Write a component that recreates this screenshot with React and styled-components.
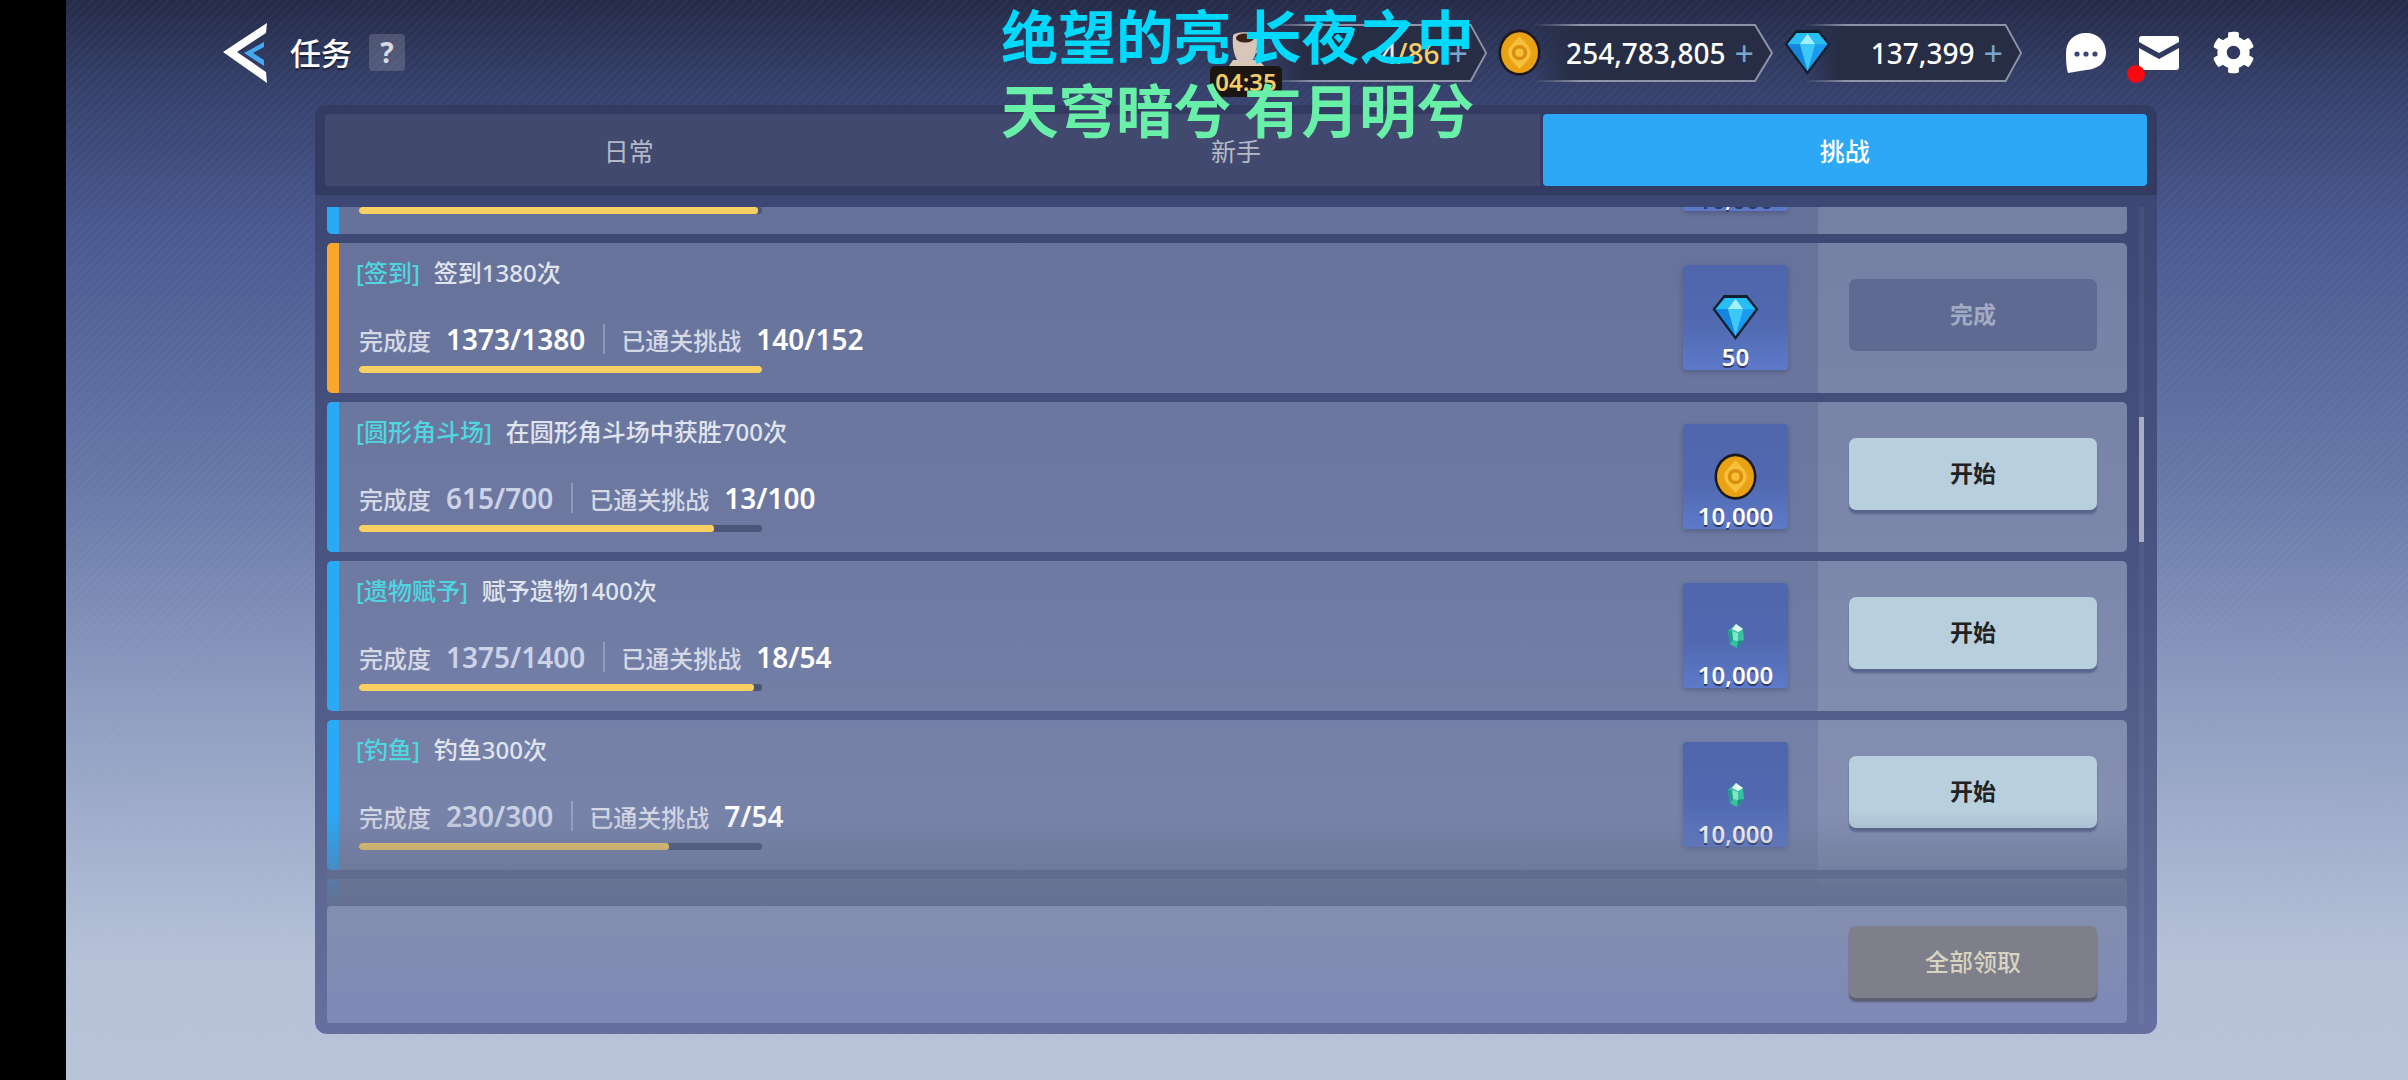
import React from "react";
import styled, { createGlobalStyle } from "styled-components";
import { FaCog } from "react-icons/fa";

const GlobalStyle = createGlobalStyle`
  html, body {
    margin: 0;
    padding: 0;
    background: #000;
  }
  * {
    box-sizing: border-box;
  }
`;

const FONT = `"Noto Sans", "Noto Sans CJK SC", sans-serif`;

const tasks = [
  { id: 0, accent: "#2aa9f7", reward: "gem", amount: "10,000", pct: 99, track: true },
  {
    id: 1,
    accent: "#f9a62b",
    tag: "[签到]",
    title: "签到1380次",
    done: "1373/1380",
    doneBright: true,
    stage: "140/152",
    pct: 100,
    reward: "diamond",
    amount: "50",
    finished: true,
  },
  {
    id: 2,
    accent: "#2aa9f7",
    tag: "[圆形角斗场]",
    title: "在圆形角斗场中获胜700次",
    done: "615/700",
    stage: "13/100",
    pct: 88,
    reward: "coin",
    amount: "10,000",
  },
  {
    id: 3,
    accent: "#2aa9f7",
    tag: "[遗物赋予]",
    title: "赋予遗物1400次",
    done: "1375/1400",
    stage: "18/54",
    pct: 98,
    reward: "gem",
    amount: "10,000",
  },
  {
    id: 4,
    accent: "#2aa9f7",
    tag: "[钓鱼]",
    title: "钓鱼300次",
    done: "230/300",
    stage: "7/54",
    pct: 77,
    reward: "gem",
    amount: "10,000",
  },
  { id: 5, accent: "#2aa9f7", reward: "gem", amount: "", pct: 0 },
];

function CoinIcon({ size = 42 }) {
  return (
    <svg width={size} height={size * 1.1} viewBox="0 0 42 46">
      <ellipse cx="21" cy="23" rx="20.5" ry="22.5" fill="#1d1a1f" />
      <ellipse cx="21" cy="23" rx="18" ry="20" fill="#e9a214" />
      <path d="M21 7 C25 12 32 17 32 23 C32 29 25 34 21 39 C17 34 10 29 10 23 C10 17 17 12 21 7 Z" fill="#f8bf3a" />
      <circle cx="21" cy="23" r="7.5" fill="#d98f10" />
      <circle cx="21" cy="23" r="4" fill="#f8bf3a" />
    </svg>
  );
}

function DiamondIcon({ width = 49, height = 47 }) {
  return (
    <svg width={width} height={height} viewBox="0 0 47 46">
      <path d="M12 1 H35 L46 15 L23.5 45 L1 15 Z" fill="#11202e" />
      <path d="M13 4 H34 L43 15 L23.5 41 L4 15 Z" fill="#1a9bf0" />
      <path d="M13 4 H34 L43 15 H4 Z" fill="#29bdf6" />
      <path d="M23.5 5 L31 15 H16 Z" fill="#a3effa" />
      <path d="M16 15 H31 L23.5 41 Z" fill="#3dc9f7" />
      <path d="M4 15 H16 L23.5 41 Z" fill="#1285e0" />
    </svg>
  );
}

function GemIcon() {
  return (
    <svg width="18" height="26" viewBox="0 0 18 26">
      <path d="M9 1 L16 6 L17 17 L10 25 L3 21 L1 8 Z" fill="#38c0a0" />
      <path d="M9 1 L16 6 L11 9 L5 6 Z" fill="#e6fbf2" />
      <path d="M5 8 L11 10 L11 18 L6 17 Z" fill="#7fe6c6" />
      <path d="M11 18 L17 17 L10 25 Z" fill="#1e8f7c" />
      <path d="M1 8 L5 8 L6 17 L3 21 Z" fill="#1f9c8a" />
    </svg>
  );
}

function BackIcon() {
  return (
    <svg width="46" height="62" viewBox="0 0 46 62">
      <path d="M45 1 L1 30 L45 61 L44 50 L15 30 L44 11 Z" fill="#fff" />
      <path d="M42 20 L22 31 L42 44 L42 38 L31 31 L42 25 Z" fill="#46a9ef" />
    </svg>
  );
}

function CupIcon() {
  return (
    <svg width="40" height="38" viewBox="0 0 40 38">
      <path d="M3 36 L7 30 H33 L38 36 Z" fill="#dcc8b6" />
      <path d="M7 6 C7 1 31 1 31 6 C32 16 30 26 26 31 H12 C8 26 6 16 7 6 Z" fill="#d8c6bb" />
      <ellipse cx="19" cy="8" rx="9" ry="4.5" fill="#3a2318" />
      <path d="M31 10 C37 10 37 20 29 22" fill="none" stroke="#c8b3a5" strokeWidth="3" />
    </svg>
  );
}

function ChatIcon() {
  return (
    <svg width="40" height="40" viewBox="0 0 40 40">
      <path d="M20 0 C32 0 40 8 40 20 C40 30 32 36 20 37 C14 38 8 39 2 40 C0 34 0 26 0 20 C0 8 8 0 20 0 Z" fill="#fff" />
      <circle cx="11" cy="21" r="2.6" fill="#3b4672" />
      <circle cx="20" cy="21" r="2.6" fill="#3b4672" />
      <circle cx="29" cy="21" r="2.6" fill="#3b4672" />
    </svg>
  );
}

function MailIcon() {
  return (
    <svg width="40" height="34" viewBox="0 0 40 34">
      <path d="M3 0 H37 C39 0 40 1 40 3 V6 L20 17 L0 6 V3 C0 1 1 0 3 0 Z" fill="#fff" />
      <path d="M0 12 L20 23 L40 12 V31 C40 33 39 34 37 34 H3 C1 34 0 33 0 31 Z" fill="#fff" />
    </svg>
  );
}

function PillFrame() {
  return (
    <FrameSvg preserveAspectRatio="none" viewBox="0 0 240 58">
      <defs>
        <linearGradient id="pillFill" x1="0" x2="1" y1="0" y2="0">
          <stop offset="0" stopColor="#262d45" stopOpacity="0" />
          <stop offset="0.16" stopColor="#262d45" />
          <stop offset="1" stopColor="#262d45" />
        </linearGradient>
        <linearGradient id="pillLine" x1="0" x2="1" y1="0" y2="0">
          <stop offset="0" stopColor="#8f94a8" stopOpacity="0" />
          <stop offset="0.2" stopColor="#8f94a8" />
          <stop offset="1" stopColor="#8f94a8" />
        </linearGradient>
      </defs>
      <path d="M0 1 H222 L239 29 L222 57 H0 Z" fill="url(#pillFill)" />
      <path d="M0 1 H222 L239 29 L222 57 H0" fill="none" stroke="url(#pillLine)" strokeWidth="2" />
    </FrameSvg>
  );
}

function Reward({ type, amount }) {
  return (
    <RewardBox>
      <RewardIcon>
        {type === "coin" && <CoinIcon size={43} />}
        {type === "diamond" && <DiamondIcon />}
        {type === "gem" && <GemIcon />}
      </RewardIcon>
      <RewardAmount>{amount}</RewardAmount>
    </RewardBox>
  );
}

function TaskCard({ task }) {
  return (
    <Card>
      <Accent $color={task.accent} />
      <CardMain>
        <CardInfo>
          <TitleRow>
            {task.tag && <Tag>{task.tag}</Tag>}
            {task.title && <Title>{task.title}</Title>}
          </TitleRow>
          <ProgressRow>
            {task.done && (
              <>
                <Label>完成度</Label>
                <Count $bright={task.doneBright}>{task.done}</Count>
                <Divider />
                <Label>已通关挑战</Label>
                <Count $bright>{task.stage}</Count>
              </>
            )}
          </ProgressRow>
          <BarTrack>
            <BarFill style={{ width: `${task.pct}%` }} />
          </BarTrack>
        </CardInfo>
        <Reward type={task.reward} amount={task.amount} />
      </CardMain>
      <CardAction>
        {task.finished && <DoneButton>完成</DoneButton>}
        {!task.finished && task.title && <StartButton>开始</StartButton>}
      </CardAction>
    </Card>
  );
}

export default function App() {
  return (
    <Page>
      <GlobalStyle />
      <SideBar />
      <Stage>
        <Header>
          <HeaderLeft>
            <BackIcon />
            <PageTitle>任务</PageTitle>
            <HelpBadge>?</HelpBadge>
          </HeaderLeft>
          <HeaderRight>
            <Pill $width={218}>
              <PillFrame />
              <EnergyText>
                <b>4</b>/86
              </EnergyText>
              <Plus>+</Plus>
            </Pill>
            <Currency $gap={11}>
              <CurrencyIcon $overlap={8}>
                <CoinIcon size={43} />
              </CurrencyIcon>
              <Pill $width={240}>
                <PillFrame />
                <Amount>254,783,805</Amount>
                <Plus>+</Plus>
              </Pill>
            </Currency>
            <Currency $gap={10}>
              <CurrencyIcon $overlap={28}>
                <DiamondIcon />
              </CurrencyIcon>
              <Pill $width={218}>
                <PillFrame />
                <Amount>137,399</Amount>
                <Plus>+</Plus>
              </Pill>
            </Currency>
            <IconGroup>
              <ChatIcon />
              <MailButton>
                <MailIcon />
                <RedDot />
              </MailButton>
              <FaCog size={43} color="#fff" />
            </IconGroup>
          </HeaderRight>
        </Header>
        <Panel>
          <Tabs>
            <Tab>日常</Tab>
            <Tab>新手</Tab>
            <Tab $active>挑战</Tab>
          </Tabs>
          <PanelBody>
            <BodyColumn>
              <ListClip>
                <CardList>
                  {tasks.map((t) => (
                    <TaskCard key={t.id} task={t} />
                  ))}
                </CardList>
                <ListFade />
              </ListClip>
              <Footer>
                <ClaimButton>全部领取</ClaimButton>
              </Footer>
            </BodyColumn>
            <ScrollTrack>
              <ScrollThumb />
            </ScrollTrack>
          </PanelBody>
        </Panel>
      </Stage>
      <FloatingTimer>
        <CupIcon />
        <TimerText>04:35</TimerText>
      </FloatingTimer>
      <Lyrics>
        <LyricLine $color="#00d9fb">绝望的亮 长夜之中</LyricLine>
        <LyricLine $color="#68efa8">天穹暗兮 有月明兮</LyricLine>
      </Lyrics>
    </Page>
  );
}

const Page = styled.div`
  position: relative;
  display: flex;
  width: 2408px;
  height: 1080px;
  overflow: hidden;
  font-family: ${FONT};
  background: #000;
`;

const SideBar = styled.div`
  flex: 0 0 66px;
  background: #000;
`;

const Stage = styled.div`
  flex: 1;
  display: flex;
  flex-direction: column;
  background:
    repeating-linear-gradient(135deg, rgba(255, 255, 255, 0.025) 0 2px, transparent 2px 6px),
    linear-gradient(180deg, #252b48 0, #36416c 90px, #4a5990 230px, #6778a8 480px, #8d9cc0 700px, #b6c1d8 960px, #b8c3d9 100%);
`;

const Header = styled.div`
  flex: 0 0 105px;
  display: flex;
  align-items: center;
  justify-content: space-between;
  padding: 0 153px 0 156px;
`;

const HeaderLeft = styled.div`
  display: flex;
  align-items: center;
`;

const PageTitle = styled.div`
  margin-left: 22px;
  font-size: 31px;
  font-weight: 500;
  line-height: 40px;
  color: #fff;
  text-shadow: 0 2px 1px #1c2138;
`;

const HelpBadge = styled.div`
  width: 36px;
  height: 37px;
  margin-left: 17px;
  border-radius: 4px;
  background: rgba(255, 255, 255, 0.16);
  color: #d8dbe4;
  font-size: 28px;
  font-weight: 700;
  line-height: 37px;
  text-align: center;
`;

const HeaderRight = styled.div`
  display: flex;
  align-items: center;
`;

const Currency = styled.div`
  display: flex;
  align-items: center;
  margin-left: ${(p) => p.$gap}px;
`;

const CurrencyIcon = styled.div`
  position: relative;
  z-index: 1;
  display: flex;
  margin-right: -${(p) => p.$overlap}px;
`;

const Pill = styled.div`
  position: relative;
  display: flex;
  align-items: center;
  justify-content: flex-end;
  width: ${(p) => p.$width}px;
  height: 58px;
  padding-right: 19px;
`;

const FrameSvg = styled.svg`
  position: absolute;
  inset: 0;
  width: 100%;
  height: 100%;
`;

const Amount = styled.span`
  position: relative;
  color: #fff;
  font-size: 28px;
  font-weight: 500;
`;

const EnergyText = styled.span`
  position: relative;
  color: #f4cf6a;
  font-size: 28px;
  font-weight: 500;
  b {
    color: #e8e8e8;
    font-weight: 500;
  }
`;

const Plus = styled.span`
  position: relative;
  margin-left: 9px;
  color: #7ba6cc;
  font-size: 34px;
  line-height: 34px;
`;

const IconGroup = styled.div`
  display: flex;
  align-items: center;
  gap: 33px;
  margin-left: 44px;
`;

const MailButton = styled.div`
  position: relative;
  display: flex;
`;

const RedDot = styled.span`
  position: absolute;
  left: -12px;
  bottom: -13px;
  width: 18px;
  height: 18px;
  border-radius: 50%;
  background: #f60a0f;
`;

const Panel = styled.div`
  width: 1842px;
  height: 929px;
  margin-left: 249px;
  border-radius: 12px;
  background: linear-gradient(180deg, #333b63 0, #333b63 90px, #3c4774 90px, #4a5582 480px, #5c6690 760px, #666f9f 100%);
`;

const Tabs = styled.div`
  display: grid;
  grid-template-columns: 1fr 1fr 1fr;
  height: 90px;
  padding: 9px 10px;
  border-radius: 4px;
`;

const Tab = styled.div`
  display: flex;
  align-items: center;
  justify-content: center;
  background: #414a6e;
  color: #b4b9c8;
  font-size: 25px;
  &:first-child {
    border-radius: 4px 0 0 4px;
  }
  ${(p) =>
    p.$active &&
    `
    margin-left: 3px;
    border-radius: 4px;
    background: #2ca8f6;
    color: #fff;
    font-weight: 500;
  `}
`;

const PanelBody = styled.div`
  display: flex;
  gap: 12px;
  height: 816px;
  margin-top: 12px;
  padding-left: 12px;
`;

const BodyColumn = styled.div`
  display: flex;
  flex-direction: column;
  width: 1800px;
`;

const ListClip = styled.div`
  position: relative;
  height: 699px;
  overflow: hidden;
`;

const CardList = styled.div`
  display: flex;
  flex-direction: column;
  gap: 9px;
  margin-top: -123px;
`;

const ListFade = styled.div`
  position: absolute;
  left: 0;
  right: 0;
  bottom: 0;
  height: 95px;
  background: linear-gradient(180deg, rgba(100, 110, 142, 0) 0, rgba(100, 110, 142, 0.5) 62%, rgba(100, 110, 142, 0.82) 75%, rgba(101, 112, 147, 1) 100%);
`;

const Card = styled.div`
  display: flex;
  flex: 0 0 150px;
  height: 150px;
  border-radius: 5px;
  overflow: hidden;
  background: rgba(170, 185, 215, 0.38);
`;

const Accent = styled.div`
  flex: 0 0 12px;
  background: ${(p) => p.$color};
`;

const CardMain = styled.div`
  flex: 1;
  display: flex;
  align-items: center;
  justify-content: space-between;
  padding: 0 30px 0 20px;
`;

const CardInfo = styled.div`
  align-self: flex-start;
  display: flex;
  flex-direction: column;
  width: 403px;
  padding-top: 14px;
`;

const TitleRow = styled.div`
  display: flex;
  height: 32px;
  margin-left: -3px;
  white-space: nowrap;
  font-size: 24px;
  font-weight: 500;
  line-height: 32px;
`;

const Tag = styled.span`
  margin-right: 14px;
  color: #4fd6e0;
`;

const Title = styled.span`
  color: #e0e4ee;
`;

const ProgressRow = styled.div`
  display: flex;
  align-items: center;
  height: 36px;
  margin-top: 32px;
  white-space: nowrap;
`;

const Label = styled.span`
  flex: none;
  color: #d5d9e6;
  font-size: 24px;
  font-weight: 500;
`;

const Count = styled.span`
  flex: none;
  margin-left: 15px;
  color: ${(p) => (p.$bright ? "#fff" : "#ccd3e6")};
  font-size: 28px;
  font-weight: 600;
`;

const Divider = styled.span`
  flex: none;
  width: 2px;
  height: 30px;
  margin: 0 16px 0 18px;
  background: rgba(255, 255, 255, 0.25);
`;

const BarTrack = styled.div`
  height: 7px;
  margin-top: 9px;
  border-radius: 3px;
  overflow: hidden;
  background: #4b5679;
`;

const BarFill = styled.div`
  height: 100%;
  border-radius: 3px;
  background: #f7cf62;
`;

const RewardBox = styled.div`
  display: grid;
  place-items: center;
  width: 105px;
  height: 105px;
  margin-top: -1px;
  border-radius: 4px;
  background: linear-gradient(180deg, #5066ac 0, #5069b0 55%, #5d79c9 100%);
  box-shadow: 0 2px 5px rgba(40, 50, 90, 0.35);
`;

const RewardIcon = styled.div`
  grid-area: 1 / 1;
  display: flex;
`;

const RewardAmount = styled.div`
  grid-area: 1 / 1;
  align-self: end;
  color: #fff;
  font-size: 24px;
  font-weight: 600;
  line-height: 28px;
  margin-bottom: -1px;
  text-shadow: 0 2px 0 #2e3a66;
`;

const CardAction = styled.div`
  flex: 0 0 309px;
  display: flex;
  align-items: center;
  justify-content: flex-start;
  padding: 0 0 7px 31px;
  background: rgba(255, 255, 255, 0.1);
`;

const StartButton = styled.div`
  display: flex;
  align-items: center;
  justify-content: center;
  width: 248px;
  height: 72px;
  padding-bottom: 3px;
  border-radius: 7px;
  background: #b8cfde;
  box-shadow: 0 4px 2px #58658c;
  color: #222;
  font-size: 23px;
  font-weight: 600;
`;

const DoneButton = styled(StartButton)`
  background: #5e6a92;
  box-shadow: none;
  color: #a3abc4;
`;

const Footer = styled.div`
  display: flex;
  align-items: center;
  justify-content: flex-end;
  height: 117px;
  padding: 0 30px 6px 0;
  border-radius: 4px;
  background: linear-gradient(180deg, #838eaf 0, #7f89b8 100%);
`;

const ClaimButton = styled(StartButton)`
  background: #7e7f8a;
  box-shadow: 0 4px 2px #5c5e72;
  color: #d8d4c0;
  font-size: 24px;
  font-weight: 500;
`;

const ScrollTrack = styled.div`
  width: 5px;
  height: 100%;
  padding-top: 210px;
  background: rgba(255, 255, 255, 0.05);
`;

const ScrollThumb = styled.div`
  height: 125px;
  background: #a9aec6;
`;

const FloatingTimer = styled.div`
  position: absolute;
  left: 1210px;
  top: 30px;
  width: 72px;
  display: flex;
  flex-direction: column;
  align-items: center;
`;

const TimerText = styled.div`
  width: 72px;
  height: 31px;
  margin-top: -2px;
  border-radius: 5px;
  background: #1c1612;
  color: #f1cc6a;
  font-size: 24px;
  font-weight: 600;
  line-height: 31px;
  text-align: center;
`;

const Lyrics = styled.div`
  position: absolute;
  left: 1001px;
  top: 0;
  display: flex;
  flex-direction: column;
  gap: 16px;
  padding-top: 5px;
  font-family: "Noto Sans CJK SC", sans-serif;
`;

const LyricLine = styled.div`
  color: ${(p) => p.$color};
  font-size: 57.5px;
  font-weight: 700;
  line-height: 58px;
  white-space: pre;
`;
